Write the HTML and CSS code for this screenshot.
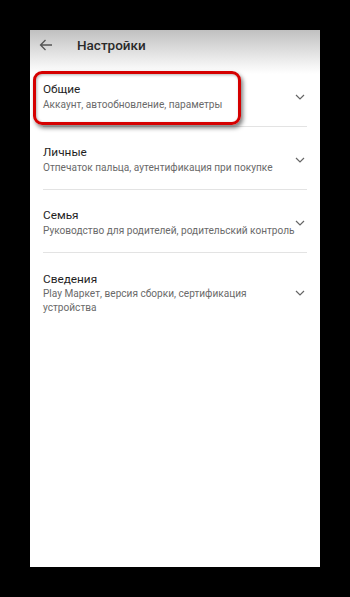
FILE: index.html
```html
<!DOCTYPE html>
<html lang="ru">
<head>
<meta charset="utf-8">
<link rel="stylesheet" href="styles.css">
</head>
<body>
<div class="panel">
  <div class="header">
    <svg class="back" width="14" height="12" viewBox="0 0 14 12"><path d="M13 6H1.5M6.5 1L1.5 6l5 5" fill="none" stroke="#555" stroke-width="1.3"/></svg>
    <div class="title">Настройки</div>
  </div>
  <div class="list">
    <div class="item">
      <div class="text">
        <div class="name">Общие</div>
        <div class="sub">Аккаунт, автообновление, параметры</div>
      </div>
      <svg class="chev" width="10" height="6" viewBox="0 0 10 6"><path d="M1 1l4 4 4-4" fill="none" stroke="#666" stroke-width="1.2"/></svg>
    </div>
    <div class="item">
      <div class="text">
        <div class="name">Личные</div>
        <div class="sub">Отпечаток пальца, аутентификация при покупке</div>
      </div>
      <svg class="chev" width="10" height="6" viewBox="0 0 10 6"><path d="M1 1l4 4 4-4" fill="none" stroke="#666" stroke-width="1.2"/></svg>
    </div>
    <div class="item">
      <div class="text">
        <div class="name">Семья</div>
        <div class="sub">Руководство для родителей, родительский контроль</div>
      </div>
      <svg class="chev" width="10" height="6" viewBox="0 0 10 6"><path d="M1 1l4 4 4-4" fill="none" stroke="#666" stroke-width="1.2"/></svg>
    </div>
    <div class="item last">
      <div class="text">
        <div class="name">Сведения</div>
        <div class="sub wrap">Play Маркет, версия сборки, сертификация устройства</div>
      </div>
      <svg class="chev" width="10" height="6" viewBox="0 0 10 6"><path d="M1 1l4 4 4-4" fill="none" stroke="#666" stroke-width="1.2"/></svg>
    </div>
  </div>
  <div class="highlight"></div>
</div>
</body>
</html>
```
FILE: styles.css
```css
html, body {
  margin: 0;
  padding: 0;
  background: #000;
}
body {
  padding: 30px;
  font-family: Roboto, "Noto Sans", sans-serif;
}
.panel {
  position: relative;
  width: 290px;
  height: 537px;
  background: linear-gradient(#c0c0c0 0, #f2f2f2 34px, #fff 44px, #fff 100%);
}
.header {
  height: 34px;
  box-sizing: border-box;
  padding: 8px 0 0 9px;
  display: flex;
  align-items: flex-start;
}
.back {
  margin-top: 1px;
}
.title {
  margin-left: 24px;
  font-size: 13.5px;
  line-height: 14px;
  font-weight: 500;
  color: #2a2a2a;
}
.list {
  padding: 0 13px;
}
.item {
  display: flex;
  align-items: center;
  padding: 17px 0 14px;
  border-bottom: 1px solid #e3e3e3;
  min-height: 31px;
}
.item.last {
  border-bottom: none;
  padding-top: 18px;
}
.text {
  flex: 1;
  min-width: 0;
}
.name {
  font-size: 11.8px;
  line-height: 16px;
  color: #1e1e1e;
}
.sub {
  font-size: 10.1px;
  line-height: 15px;
  color: #6a6a6a;
  white-space: nowrap;
}
.sub.wrap {
  white-space: normal;
  width: 220px;
  line-height: 14px;
}
.chev {
  margin-right: 2px;
  flex: none;
}
.highlight {
  position: absolute;
  left: 3px;
  top: 41px;
  width: 208px;
  height: 54px;
  box-sizing: border-box;
  border: 3.5px solid #d50000;
  border-radius: 9px;
  box-shadow: 2px 3px 4px rgba(0,0,0,0.5), inset 1px 1px 3px rgba(0,0,0,0.3);
}
```
